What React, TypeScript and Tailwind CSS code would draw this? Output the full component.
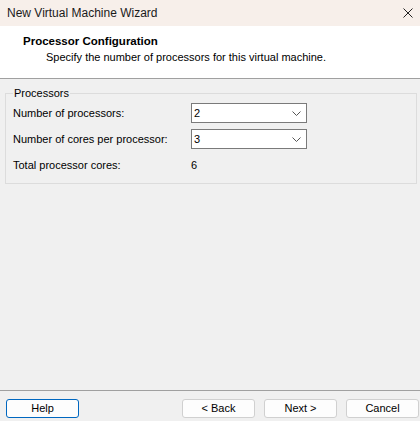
const font = { fontFamily: '"Liberation Sans", Arial, sans-serif' }

function Combo({ value }: { value: string }) {
  return (
    <div className="flex h-[20px] w-[116px] items-center justify-between border border-[#7a7a7a] bg-white pl-[2px] pr-[5px] text-[11px] text-black">
      <span>{value}</span>
      <svg width="9" height="5" viewBox="0 0 9 5">
        <path d="M0.5 0.5 L4.5 4.5 L8.5 0.5" fill="none" stroke="#555" strokeWidth="1" />
      </svg>
    </div>
  )
}

function Btn({ label, focused }: { label: string; focused?: boolean }) {
  return (
    <button
      className={
        'h-[19px] w-[73px] rounded-[3px] bg-[#fdfdfd] text-[11px] leading-none text-black ' +
        (focused ? 'border border-[#0067c0]' : 'border border-[#d0d0d0]')
      }
    >
      {label}
    </button>
  )
}

export default function App() {
  return (
    <div className="flex h-[421px] w-[420px] flex-col bg-[#f0f0f0] text-[11px] text-black" style={font}>
      <div className="flex h-[26px] items-center justify-between bg-[#f7efea] pl-[7px] pr-[6px]">
        <span className="text-[12px] text-[#1a1a1a]">New Virtual Machine Wizard</span>
        <svg width="10" height="10" viewBox="0 0 10 10" className="mr-[1px]">
          <path d="M0.5 0.5 L9.5 9.5 M9.5 0.5 L0.5 9.5" stroke="#222" strokeWidth="1" />
        </svg>
      </div>
      <div className="h-[53px] border-b border-[#a0a0a0] bg-white pl-[23px] pt-[8px]">
        <div className="text-[11.5px] font-bold leading-[15px]">Processor Configuration</div>
        <div className="pl-[23px] text-[11px] leading-[16px]">Specify the number of processors for this virtual machine.</div>
      </div>
      <div className="flex-1 px-[5px] pt-[14px]">
        <div className="relative h-[91px] w-[412px] border border-[#dcdcdc] px-[7px] pt-[9px]">
          <span className="absolute left-[7px] top-[-9px] bg-[#f0f0f0] px-[1px] leading-[16px]">Processors</span>
          <div className="flex flex-col gap-[6px] whitespace-nowrap">
            <div className="flex h-[20px] items-center">
              <span className="w-[178px]">Number of processors:</span>
              <Combo value="2" />
            </div>
            <div className="flex h-[20px] items-center">
              <span className="w-[178px]">Number of cores per processor:</span>
              <Combo value="3" />
            </div>
            <div className="flex h-[20px] items-center">
              <span className="w-[178px]">Total processor cores:</span>
              <span>6</span>
            </div>
          </div>
        </div>
      </div>
      <div className="flex h-[31px] items-start justify-between border-t border-[#a0a0a0] pl-[6px] pr-[1px] pt-[8px]">
        <Btn label="Help" focused />
        <div className="flex gap-[9px]">
          <Btn label="< Back" />
          <Btn label="Next >" />
          <Btn label="Cancel" />
        </div>
      </div>
    </div>
  )
}
